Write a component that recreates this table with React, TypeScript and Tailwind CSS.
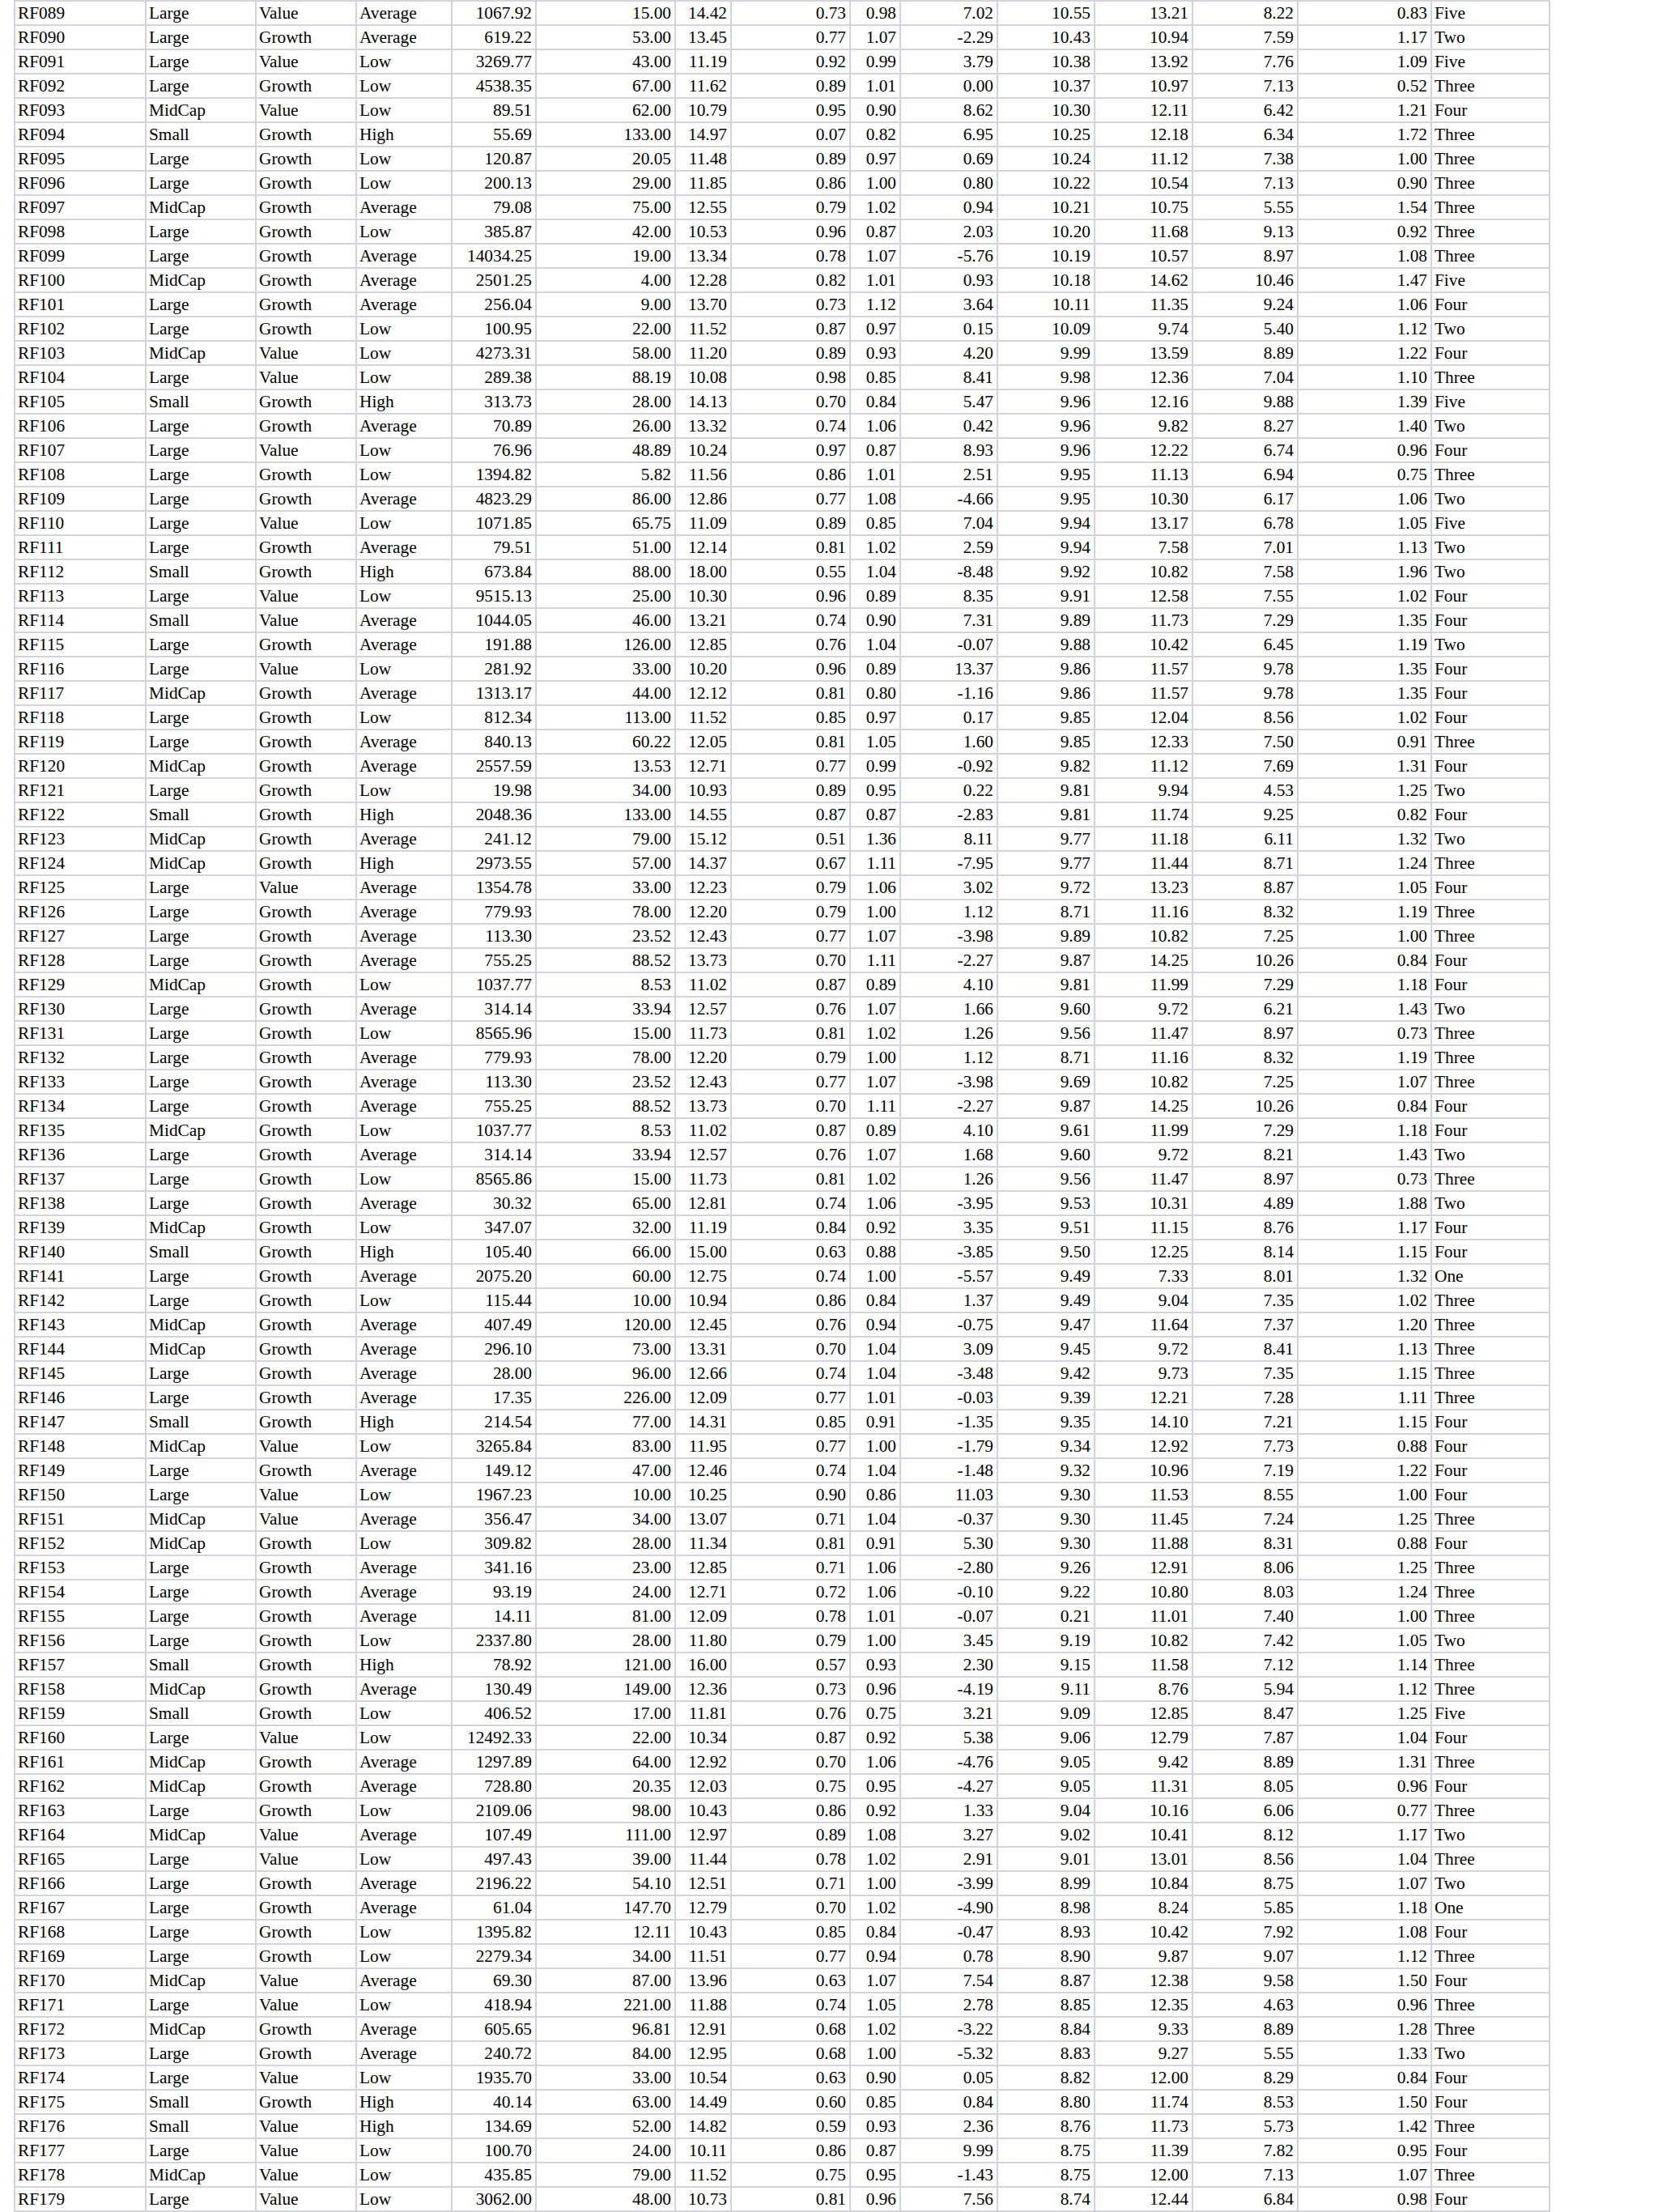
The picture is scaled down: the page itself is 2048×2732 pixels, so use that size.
const raw = `RF089 Large Value Average 1067.92 15.00 14.42 0.73 0.98 7.02 10.55 13.21 8.22 0.83 Five
RF090 Large Growth Average 619.22 53.00 13.45 0.77 1.07 -2.29 10.43 10.94 7.59 1.17 Two
RF091 Large Value Low 3269.77 43.00 11.19 0.92 0.99 3.79 10.38 13.92 7.76 1.09 Five
RF092 Large Growth Low 4538.35 67.00 11.62 0.89 1.01 0.00 10.37 10.97 7.13 0.52 Three
RF093 MidCap Value Low 89.51 62.00 10.79 0.95 0.90 8.62 10.30 12.11 6.42 1.21 Four
RF094 Small Growth High 55.69 133.00 14.97 0.07 0.82 6.95 10.25 12.18 6.34 1.72 Three
RF095 Large Growth Low 120.87 20.05 11.48 0.89 0.97 0.69 10.24 11.12 7.38 1.00 Three
RF096 Large Growth Low 200.13 29.00 11.85 0.86 1.00 0.80 10.22 10.54 7.13 0.90 Three
RF097 MidCap Growth Average 79.08 75.00 12.55 0.79 1.02 0.94 10.21 10.75 5.55 1.54 Three
RF098 Large Growth Low 385.87 42.00 10.53 0.96 0.87 2.03 10.20 11.68 9.13 0.92 Three
RF099 Large Growth Average 14034.25 19.00 13.34 0.78 1.07 -5.76 10.19 10.57 8.97 1.08 Three
RF100 MidCap Growth Average 2501.25 4.00 12.28 0.82 1.01 0.93 10.18 14.62 10.46 1.47 Five
RF101 Large Growth Average 256.04 9.00 13.70 0.73 1.12 3.64 10.11 11.35 9.24 1.06 Four
RF102 Large Growth Low 100.95 22.00 11.52 0.87 0.97 0.15 10.09 9.74 5.40 1.12 Two
RF103 MidCap Value Low 4273.31 58.00 11.20 0.89 0.93 4.20 9.99 13.59 8.89 1.22 Four
RF104 Large Value Low 289.38 88.19 10.08 0.98 0.85 8.41 9.98 12.36 7.04 1.10 Three
RF105 Small Growth High 313.73 28.00 14.13 0.70 0.84 5.47 9.96 12.16 9.88 1.39 Five
RF106 Large Growth Average 70.89 26.00 13.32 0.74 1.06 0.42 9.96 9.82 8.27 1.40 Two
RF107 Large Value Low 76.96 48.89 10.24 0.97 0.87 8.93 9.96 12.22 6.74 0.96 Four
RF108 Large Growth Low 1394.82 5.82 11.56 0.86 1.01 2.51 9.95 11.13 6.94 0.75 Three
RF109 Large Growth Average 4823.29 86.00 12.86 0.77 1.08 -4.66 9.95 10.30 6.17 1.06 Two
RF110 Large Value Low 1071.85 65.75 11.09 0.89 0.85 7.04 9.94 13.17 6.78 1.05 Five
RF111 Large Growth Average 79.51 51.00 12.14 0.81 1.02 2.59 9.94 7.58 7.01 1.13 Two
RF112 Small Growth High 673.84 88.00 18.00 0.55 1.04 -8.48 9.92 10.82 7.58 1.96 Two
RF113 Large Value Low 9515.13 25.00 10.30 0.96 0.89 8.35 9.91 12.58 7.55 1.02 Four
RF114 Small Value Average 1044.05 46.00 13.21 0.74 0.90 7.31 9.89 11.73 7.29 1.35 Four
RF115 Large Growth Average 191.88 126.00 12.85 0.76 1.04 -0.07 9.88 10.42 6.45 1.19 Two
RF116 Large Value Low 281.92 33.00 10.20 0.96 0.89 13.37 9.86 11.57 9.78 1.35 Four
RF117 MidCap Growth Average 1313.17 44.00 12.12 0.81 0.80 -1.16 9.86 11.57 9.78 1.35 Four
RF118 Large Growth Low 812.34 113.00 11.52 0.85 0.97 0.17 9.85 12.04 8.56 1.02 Four
RF119 Large Growth Average 840.13 60.22 12.05 0.81 1.05 1.60 9.85 12.33 7.50 0.91 Three
RF120 MidCap Growth Average 2557.59 13.53 12.71 0.77 0.99 -0.92 9.82 11.12 7.69 1.31 Four
RF121 Large Growth Low 19.98 34.00 10.93 0.89 0.95 0.22 9.81 9.94 4.53 1.25 Two
RF122 Small Growth High 2048.36 133.00 14.55 0.87 0.87 -2.83 9.81 11.74 9.25 0.82 Four
RF123 MidCap Growth Average 241.12 79.00 15.12 0.51 1.36 8.11 9.77 11.18 6.11 1.32 Two
RF124 MidCap Growth High 2973.55 57.00 14.37 0.67 1.11 -7.95 9.77 11.44 8.71 1.24 Three
RF125 Large Value Average 1354.78 33.00 12.23 0.79 1.06 3.02 9.72 13.23 8.87 1.05 Four
RF126 Large Growth Average 779.93 78.00 12.20 0.79 1.00 1.12 8.71 11.16 8.32 1.19 Three
RF127 Large Growth Average 113.30 23.52 12.43 0.77 1.07 -3.98 9.89 10.82 7.25 1.00 Three
RF128 Large Growth Average 755.25 88.52 13.73 0.70 1.11 -2.27 9.87 14.25 10.26 0.84 Four
RF129 MidCap Growth Low 1037.77 8.53 11.02 0.87 0.89 4.10 9.81 11.99 7.29 1.18 Four
RF130 Large Growth Average 314.14 33.94 12.57 0.76 1.07 1.66 9.60 9.72 6.21 1.43 Two
RF131 Large Growth Low 8565.96 15.00 11.73 0.81 1.02 1.26 9.56 11.47 8.97 0.73 Three
RF132 Large Growth Average 779.93 78.00 12.20 0.79 1.00 1.12 8.71 11.16 8.32 1.19 Three
RF133 Large Growth Average 113.30 23.52 12.43 0.77 1.07 -3.98 9.69 10.82 7.25 1.07 Three
RF134 Large Growth Average 755.25 88.52 13.73 0.70 1.11 -2.27 9.87 14.25 10.26 0.84 Four
RF135 MidCap Growth Low 1037.77 8.53 11.02 0.87 0.89 4.10 9.61 11.99 7.29 1.18 Four
RF136 Large Growth Average 314.14 33.94 12.57 0.76 1.07 1.68 9.60 9.72 8.21 1.43 Two
RF137 Large Growth Low 8565.86 15.00 11.73 0.81 1.02 1.26 9.56 11.47 8.97 0.73 Three
RF138 Large Growth Average 30.32 65.00 12.81 0.74 1.06 -3.95 9.53 10.31 4.89 1.88 Two
RF139 MidCap Growth Low 347.07 32.00 11.19 0.84 0.92 3.35 9.51 11.15 8.76 1.17 Four
RF140 Small Growth High 105.40 66.00 15.00 0.63 0.88 -3.85 9.50 12.25 8.14 1.15 Four
RF141 Large Growth Average 2075.20 60.00 12.75 0.74 1.00 -5.57 9.49 7.33 8.01 1.32 One
RF142 Large Growth Low 115.44 10.00 10.94 0.86 0.84 1.37 9.49 9.04 7.35 1.02 Three
RF143 MidCap Growth Average 407.49 120.00 12.45 0.76 0.94 -0.75 9.47 11.64 7.37 1.20 Three
RF144 MidCap Growth Average 296.10 73.00 13.31 0.70 1.04 3.09 9.45 9.72 8.41 1.13 Three
RF145 Large Growth Average 28.00 96.00 12.66 0.74 1.04 -3.48 9.42 9.73 7.35 1.15 Three
RF146 Large Growth Average 17.35 226.00 12.09 0.77 1.01 -0.03 9.39 12.21 7.28 1.11 Three
RF147 Small Growth High 214.54 77.00 14.31 0.85 0.91 -1.35 9.35 14.10 7.21 1.15 Four
RF148 MidCap Value Low 3265.84 83.00 11.95 0.77 1.00 -1.79 9.34 12.92 7.73 0.88 Four
RF149 Large Growth Average 149.12 47.00 12.46 0.74 1.04 -1.48 9.32 10.96 7.19 1.22 Four
RF150 Large Value Low 1967.23 10.00 10.25 0.90 0.86 11.03 9.30 11.53 8.55 1.00 Four
RF151 MidCap Value Average 356.47 34.00 13.07 0.71 1.04 -0.37 9.30 11.45 7.24 1.25 Three
RF152 MidCap Growth Low 309.82 28.00 11.34 0.81 0.91 5.30 9.30 11.88 8.31 0.88 Four
RF153 Large Growth Average 341.16 23.00 12.85 0.71 1.06 -2.80 9.26 12.91 8.06 1.25 Three
RF154 Large Growth Average 93.19 24.00 12.71 0.72 1.06 -0.10 9.22 10.80 8.03 1.24 Three
RF155 Large Growth Average 14.11 81.00 12.09 0.78 1.01 -0.07 0.21 11.01 7.40 1.00 Three
RF156 Large Growth Low 2337.80 28.00 11.80 0.79 1.00 3.45 9.19 10.82 7.42 1.05 Two
RF157 Small Growth High 78.92 121.00 16.00 0.57 0.93 2.30 9.15 11.58 7.12 1.14 Three
RF158 MidCap Growth Average 130.49 149.00 12.36 0.73 0.96 -4.19 9.11 8.76 5.94 1.12 Three
RF159 Small Growth Low 406.52 17.00 11.81 0.76 0.75 3.21 9.09 12.85 8.47 1.25 Five
RF160 Large Value Low 12492.33 22.00 10.34 0.87 0.92 5.38 9.06 12.79 7.87 1.04 Four
RF161 MidCap Growth Average 1297.89 64.00 12.92 0.70 1.06 -4.76 9.05 9.42 8.89 1.31 Three
RF162 MidCap Growth Average 728.80 20.35 12.03 0.75 0.95 -4.27 9.05 11.31 8.05 0.96 Four
RF163 Large Growth Low 2109.06 98.00 10.43 0.86 0.92 1.33 9.04 10.16 6.06 0.77 Three
RF164 MidCap Value Average 107.49 111.00 12.97 0.89 1.08 3.27 9.02 10.41 8.12 1.17 Two
RF165 Large Value Low 497.43 39.00 11.44 0.78 1.02 2.91 9.01 13.01 8.56 1.04 Three
RF166 Large Growth Average 2196.22 54.10 12.51 0.71 1.00 -3.99 8.99 10.84 8.75 1.07 Two
RF167 Large Growth Average 61.04 147.70 12.79 0.70 1.02 -4.90 8.98 8.24 5.85 1.18 One
RF168 Large Growth Low 1395.82 12.11 10.43 0.85 0.84 -0.47 8.93 10.42 7.92 1.08 Four
RF169 Large Growth Low 2279.34 34.00 11.51 0.77 0.94 0.78 8.90 9.87 9.07 1.12 Three
RF170 MidCap Value Average 69.30 87.00 13.96 0.63 1.07 7.54 8.87 12.38 9.58 1.50 Four
RF171 Large Value Low 418.94 221.00 11.88 0.74 1.05 2.78 8.85 12.35 4.63 0.96 Three
RF172 MidCap Growth Average 605.65 96.81 12.91 0.68 1.02 -3.22 8.84 9.33 8.89 1.28 Three
RF173 Large Growth Average 240.72 84.00 12.95 0.68 1.00 -5.32 8.83 9.27 5.55 1.33 Two
RF174 Large Value Low 1935.70 33.00 10.54 0.63 0.90 0.05 8.82 12.00 8.29 0.84 Four
RF175 Small Growth High 40.14 63.00 14.49 0.60 0.85 0.84 8.80 11.74 8.53 1.50 Four
RF176 Small Value High 134.69 52.00 14.82 0.59 0.93 2.36 8.76 11.73 5.73 1.42 Three
RF177 Large Value Low 100.70 24.00 10.11 0.86 0.87 9.99 8.75 11.39 7.82 0.95 Four
RF178 MidCap Value Low 435.85 79.00 11.52 0.75 0.95 -1.43 8.75 12.00 7.13 1.07 Three
RF179 Large Value Low 3062.00 48.00 10.73 0.81 0.96 7.56 8.74 12.44 6.84 0.98 Four`;

const rows = raw.split("\n").map((line) => line.trim().split(" "));

// columns 0-3 and 14 are text, the rest are right-aligned numbers
const isText = (i: number) => i < 4 || i === 14;

export default function App() {
  return (
    <div className="min-h-screen bg-white text-black [font-family:'Liberation_Serif','Times_New_Roman',serif] text-[21.33px]">
      <div className="ml-[17px] w-max grid grid-cols-[162px_136px_124px_118px_104px_172px_69px_147px_62px_120px_120px_121px_130px_165px_146px] border-l-2 border-t-2 border-[#d3d3de]">
        {rows.map((cells) =>
          cells.map((c, i) => (
            <div
              key={cells[0] + "-" + i}
              className={
                isText(i)
                  ? "h-[30px] border-r-2 border-b-2 border-[#d3d3de] leading-[28px] pl-[3px] pr-[4px] whitespace-nowrap text-left"
                  : "h-[30px] border-r-2 border-b-2 border-[#d3d3de] leading-[28px] pl-[3px] pr-[4px] whitespace-nowrap text-right"
              }
            >
              {c}
            </div>
          ))
        )}
      </div>
    </div>
  );
}
